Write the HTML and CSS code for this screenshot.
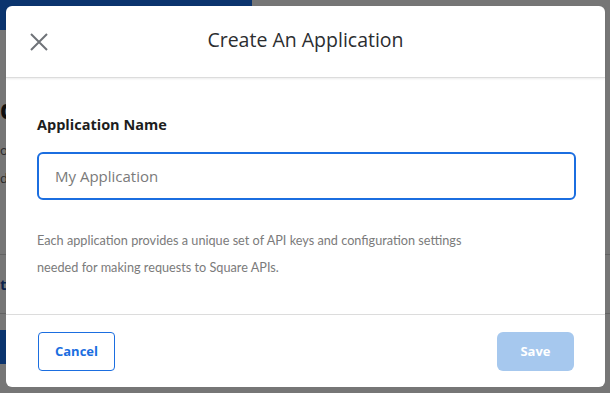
FILE: index.html
```html
<!DOCTYPE html>
<html lang="en">
<head>
    <meta charset="UTF-8">
    <title>Create An Application</title>
    <link rel="stylesheet" href="styles.css">
</head>
<body>
<!-- PAGE BEHIND THE DIALOG -->
<div class="page">
    <div class="topbar"></div>
    <div class="page-body">
        <p class="page-title">d</p>
        <p class="page-line">o</p>
        <p class="page-line">d</p>
        <hr class="page-rule first">
        <p class="page-link">t</p>
        <hr class="page-rule">
        <div class="page-button"></div>
    </div>
</div>
<div class="overlay"></div>

<!-- DIALOG -->
<div class="modal">
    <header class="modal-head">
        <button class="close" aria-label="Close">
            <svg width="18" height="18" viewBox="0 0 18 18"><path d="M1 1L17 17M17 1L1 17" stroke="#6f7378" stroke-width="2" fill="none"/></svg>
        </button>
        <h1>Create An Application</h1>
    </header>
    <div class="modal-body">
        <label class="field-label" for="appName">Application Name</label>
        <input id="appName" class="field" type="text" placeholder="My Application">
        <p class="help">Each application provides a unique set of API keys and configuration settings needed for making requests to Square APIs.</p>
    </div>
    <footer class="modal-foot">
        <button class="btn btn-cancel">Cancel</button>
        <button class="btn btn-save" disabled>Save</button>
    </footer>
</div>
</body>
</html>
```

FILE: styles.css
```css
html {
    box-sizing: border-box;
    width: 100%;
    height: 100%;
}

*, *:before, *:after {
    box-sizing: inherit;
}

body {
    margin: 0;
    width: 100%;
    height: 100%;
    overflow: hidden;
    font-family: 'Open Sans', sans-serif;
    color: #1f1f1f;
    background: #f6f6f6;
    position: relative;
}

/* page behind */
.page {
    width: 100%;
    height: 100%;
}

.topbar {
    width: 252px;
    height: 30px;
    background: #176ee6;
}

.page-body {
    padding: 62px 0 0 0;
}

.page-title {
    margin: 0 0 10px 0;
    font-size: 26px;
    line-height: 34px;
    font-weight: bold;
}

.page-line {
    margin: 0;
    font-size: 13px;
    line-height: 28px;
    color: #555;
}

.page-rule {
    border: 0;
    border-top: 1px solid #ccc;
    margin: 0;
}

.page-rule.first {
    margin-top: 62px;
}

.page-link {
    margin: 0;
    font-size: 15px;
    line-height: 58px;
    color: #1b4aa0;
    font-weight: bold;
}

.page-button {
    margin-top: 16px;
    width: 40px;
    height: 34px;
    background: #176ee6;
}

.overlay {
    position: absolute;
    left: 0;
    top: 0;
    width: 100%;
    height: 100%;
    background: rgba(0, 0, 0, 0.52);
}

/* dialog */
.modal {
    position: absolute;
    left: 6px;
    top: 6px;
    width: 599px;
    height: 381px;
    background: #fff;
    border-radius: 6px;
    display: flex;
    flex-direction: column;
}

.modal-head {
    position: relative;
    height: 72px;
    border-bottom: 1px solid #dcdcdc;
    box-shadow: 0 1px 2px rgba(0, 0, 0, 0.08);
    display: flex;
    align-items: center;
    justify-content: center;
}

.modal-head h1 {
    margin: 0 0 4px 0;
    font-size: 19.5px;
    font-weight: normal;
    color: #2b2d30;
}

.close {
    position: absolute;
    left: 24px;
    top: 27px;
    padding: 0;
    border: 0;
    background: none;
    width: 18px;
    height: 18px;
    display: block;
}

.close svg {
    display: block;
}

.modal-body {
    flex: 1;
    padding: 37px 29px 0 31px;
    border-bottom: 1px solid #dcdcdc;
}

.field-label {
    display: block;
    font-size: 14.5px;
    font-weight: bold;
    color: #1d1d1d;
    margin-bottom: 18px;
}

.field {
    display: block;
    width: 100%;
    height: 48px;
    border: 2px solid #1b6ee0;
    border-radius: 6px;
    padding: 0 16px;
    font-family: inherit;
    font-size: 15px;
    color: #333;
    outline: none;
}

.field::placeholder {
    color: #7a7a7a;
}

.help {
    margin: 27px 0 0 0;
    max-width: 436px;
    font-family: 'Lato', 'Open Sans', sans-serif;
    font-size: 12.7px;
    line-height: 27px;
    color: #7b7b7b;
}

.modal-foot {
    height: 72px;
    display: flex;
    align-items: center;
    justify-content: space-between;
    padding: 0 31px 0 32px;
}

.btn {
    height: 39px;
    border-radius: 4px;
    font-family: inherit;
    font-size: 13px;
    font-weight: bold;
    padding: 0;
}

.btn-cancel {
    width: 77px;
    background: #fff;
    border: 1px solid #1b6ee0;
    color: #1b6ee0;
}

.btn-save {
    width: 77px;
    border: 0;
    border-radius: 6px;
    background: #a6c8ee;
    color: #fff;
}
```
